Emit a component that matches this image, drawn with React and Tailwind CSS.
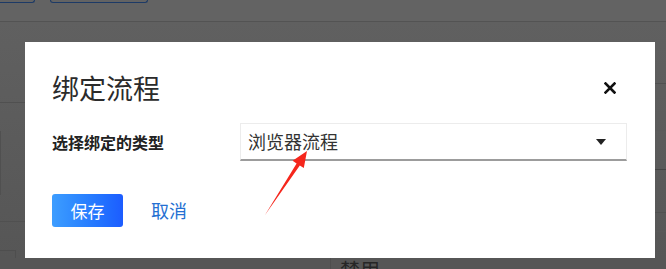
import React from "react";

export default function App() {
  return (
    <div className="relative w-[666px] h-[269px] overflow-hidden bg-[#5d5d5d] font-['Noto_Sans_CJK_SC','Microsoft_YaHei',sans-serif]">
      {/* underlying page under the overlay */}
      <div className="flex flex-col h-full">
        <div className="h-[22px] shrink-0 bg-[#636363] border-b border-[#535353] flex gap-[15px]">
          <div className="w-[35px] h-[3px] border-b border-r border-[#1d3a66] rounded-br-[4px]" />
          <div className="w-[98px] h-[3px] border border-t-0 border-[#1d3a66] rounded-b-[4px]" />
        </div>
        <div className="flex-1 flex justify-between bg-gradient-to-b from-[#606060] to-[#565656]">
          <div className="w-[25px] flex flex-col">
            <div className="h-[81px] border-b border-[#505050]" />
            <div className="mt-[28px] h-[64px] border-l border-[#505050]" />
            <div className="h-[27px] border-b border-[#505050]" />
            <div className="mt-[28px] w-[16px] flex-1 border-t border-r border-[#4e4e4e]" />
          </div>
          <div className="w-[11px] flex flex-col">
            <div className="h-[62px] border-b border-[#505050]" />
            <div className="h-[47px] border-b border-[#5a5a5a]" />
            <div className="h-[39px] border-b border-[#444]" />
            <div className="h-[43px] border-b border-[#505050]" />
            <div className="h-[19px] border-b border-[#595959]" />
          </div>
        </div>
        <div className="h-[11px] shrink-0 bg-[#565656] flex">
          <div className="ml-[330px] border-l border-[#4e4e4e] h-full" />
          <div className="ml-[9px] mt-[2px] text-[20px] leading-[20px] text-[#262626] whitespace-nowrap">禁用</div>
        </div>
      </div>

      {/* modal */}
      <div className="absolute left-[25px] top-[42px] w-[630px] h-[216px] bg-white pl-[27px] pr-[28px] pt-[28px] flex flex-col">
        <div className="h-[36px] flex items-center justify-between">
          <div className="text-[27px] leading-[36px] text-[#2b2b2b]">绑定流程</div>
          <svg width="12" height="12" viewBox="0 0 12 12" className="mr-[11px]">
            <path d="M1.5 1.5 L10.5 10.5 M10.5 1.5 L1.5 10.5" stroke="#111" strokeWidth="2.6" strokeLinecap="square" />
          </svg>
        </div>
        <div className="mt-[17px] flex items-center">
          <div className="w-[188px] text-[16px] font-semibold text-[#222]">选择绑定的类型</div>
          <div className="w-[387px] h-[38px] border border-[#ececec] border-b-2 border-b-[#9c9c9c] flex items-center justify-between pl-[7px] pr-[20px]">
            <span className="text-[18px] text-[#333]">浏览器流程</span>
            <svg width="10" height="6" viewBox="0 0 10 6">
              <path d="M0 0 L10 0 L5 6 Z" fill="#222" />
            </svg>
          </div>
        </div>
        <div className="mt-[33px] flex items-center">
          <button className="w-[71px] h-[33px] rounded-[3px] bg-gradient-to-r from-[#3d9dff] to-[#1d5cff] text-white text-[17px] flex items-center justify-center">
            保存
          </button>
          <span className="ml-[28px] text-[18px] text-[#2470d2]">取消</span>
        </div>
      </div>

      {/* red arrow annotation */}
      <svg className="absolute inset-0 pointer-events-none" width="666" height="269" viewBox="0 0 666 269">
        <polygon
          points="265,215 296.6,163.4 292.6,160.8 307,151 303.8,168.1 299.8,165.5"
          fill="#f5261c"
        />
      </svg>
    </div>
  );
}
